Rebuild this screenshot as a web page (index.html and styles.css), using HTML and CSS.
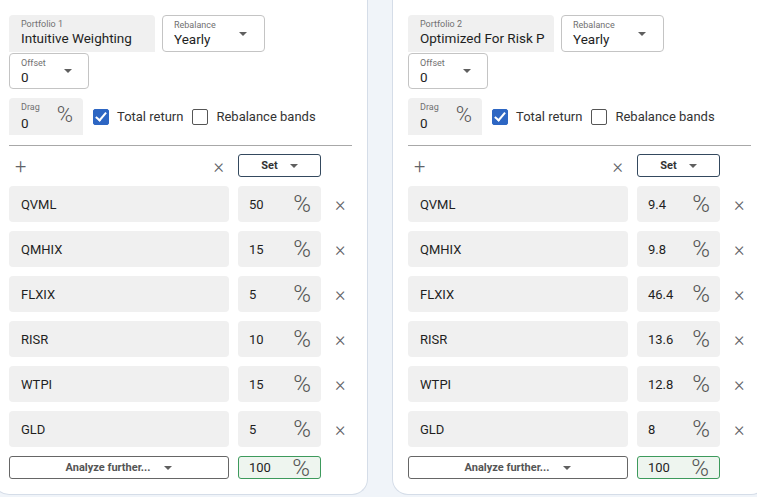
FILE: index.html
```html
<!DOCTYPE html>
<html lang="en">
<head>
    <meta charset="UTF-8">
    <meta name="viewport" content="width=device-width, initial-scale=1.0">
    <title>Portfolios</title>
    <link rel="stylesheet" href="styles.css">
</head>
<body>
    <div class="portfolios">
        <div class="card">
            <div class="settings">
                <div class="filled name-field">
                    <span class="label">Portfolio 1</span>
                    <span class="value">Intuitive Weighting</span>
                </div>
                <div class="outlined select rebalance">
                    <div>
                        <span class="label">Rebalance</span>
                        <span class="value">Yearly</span>
                    </div>
                    <span class="caret"></span>
                </div>
                <div class="outlined select offset">
                    <div>
                        <span class="label">Offset</span>
                        <span class="value">0</span>
                    </div>
                    <span class="caret"></span>
                </div>
            </div>
            <div class="options">
                <div class="filled drag-field">
                    <div>
                        <span class="label">Drag</span>
                        <span class="value">0</span>
                    </div>
                    <span class="pct">%</span>
                </div>
                <label class="check"><span class="box checked"></span>Total return</label>
                <label class="check"><span class="box"></span>Rebalance bands</label>
            </div>
            <hr class="divider">
            <div class="assets">
                <div class="tool-row">
                    <span class="icon-btn">+</span>
                    <span class="icon-btn">&times;</span>
                </div>
                <button class="set-btn">Set <span class="caret"></span></button>
                <span></span>

                <div class="filled ticker">QVML</div>
                <div class="filled weight"><span>50</span><span class="pct">%</span></div>
                <span class="remove">&times;</span>

                <div class="filled ticker">QMHIX</div>
                <div class="filled weight"><span>15</span><span class="pct">%</span></div>
                <span class="remove">&times;</span>

                <div class="filled ticker">FLXIX</div>
                <div class="filled weight"><span>5</span><span class="pct">%</span></div>
                <span class="remove">&times;</span>

                <div class="filled ticker">RISR</div>
                <div class="filled weight"><span>10</span><span class="pct">%</span></div>
                <span class="remove">&times;</span>

                <div class="filled ticker">WTPI</div>
                <div class="filled weight"><span>15</span><span class="pct">%</span></div>
                <span class="remove">&times;</span>

                <div class="filled ticker">GLD</div>
                <div class="filled weight"><span>5</span><span class="pct">%</span></div>
                <span class="remove">&times;</span>

                <button class="analyze-btn">Analyze further... <span class="caret"></span></button>
                <div class="total"><span>100</span><span class="pct">%</span></div>
                <span></span>
            </div>
        </div>

        <div class="card">
            <div class="settings">
                <div class="filled name-field">
                    <span class="label">Portfolio 2</span>
                    <span class="value">Optimized For Risk P</span>
                </div>
                <div class="outlined select rebalance">
                    <div>
                        <span class="label">Rebalance</span>
                        <span class="value">Yearly</span>
                    </div>
                    <span class="caret"></span>
                </div>
                <div class="outlined select offset">
                    <div>
                        <span class="label">Offset</span>
                        <span class="value">0</span>
                    </div>
                    <span class="caret"></span>
                </div>
            </div>
            <div class="options">
                <div class="filled drag-field">
                    <div>
                        <span class="label">Drag</span>
                        <span class="value">0</span>
                    </div>
                    <span class="pct">%</span>
                </div>
                <label class="check"><span class="box checked"></span>Total return</label>
                <label class="check"><span class="box"></span>Rebalance bands</label>
            </div>
            <hr class="divider">
            <div class="assets">
                <div class="tool-row">
                    <span class="icon-btn">+</span>
                    <span class="icon-btn">&times;</span>
                </div>
                <button class="set-btn">Set <span class="caret"></span></button>
                <span></span>

                <div class="filled ticker">QVML</div>
                <div class="filled weight"><span>9.4</span><span class="pct">%</span></div>
                <span class="remove">&times;</span>

                <div class="filled ticker">QMHIX</div>
                <div class="filled weight"><span>9.8</span><span class="pct">%</span></div>
                <span class="remove">&times;</span>

                <div class="filled ticker">FLXIX</div>
                <div class="filled weight"><span>46.4</span><span class="pct">%</span></div>
                <span class="remove">&times;</span>

                <div class="filled ticker">RISR</div>
                <div class="filled weight"><span>13.6</span><span class="pct">%</span></div>
                <span class="remove">&times;</span>

                <div class="filled ticker">WTPI</div>
                <div class="filled weight"><span>12.8</span><span class="pct">%</span></div>
                <span class="remove">&times;</span>

                <div class="filled ticker">GLD</div>
                <div class="filled weight"><span>8</span><span class="pct">%</span></div>
                <span class="remove">&times;</span>

                <button class="analyze-btn">Analyze further... <span class="caret"></span></button>
                <div class="total"><span>100</span><span class="pct">%</span></div>
                <span></span>
            </div>
        </div>
    </div>
</body>
</html>
```

FILE: styles.css
```css
body {
    font-family: Roboto, 'Noto Sans', sans-serif;
    background-color: #f0f4f9;
    color: #1f1f1f;
    margin: 0;
    padding: 0;
    overflow: hidden;
}
.portfolios {
    display: flex;
    gap: 24px;
    margin-left: -7px;
}
.card {
    flex: 0 0 375px;
    min-width: 0;
    box-sizing: border-box;
    height: 495px;
    padding: 15px 15px 0;
    background: #fff;
    border: 1px solid #d5dde8;
    border-top: none;
    border-radius: 0 0 16px 16px;
}
.label {
    display: block;
    font-size: 9px;
    line-height: 11px;
    color: #707070;
}
.value {
    display: block;
    font-size: 13.5px;
    line-height: 16px;
    white-space: nowrap;
}
.filled {
    background: #f0f0f0;
    border-radius: 4px 4px 0 0;
    box-sizing: border-box;
}
.outlined {
    border: 1px solid #c4c4c4;
    border-radius: 4px;
    box-sizing: border-box;
}
.caret {
    display: inline-block;
    width: 0;
    height: 0;
    border-left: 4.5px solid transparent;
    border-right: 4.5px solid transparent;
    border-top: 4.5px solid #5f5f5f;
}

/* name, rebalance and offset */
.settings {
    display: flex;
    flex-wrap: wrap;
    column-gap: 7px;
    row-gap: 1px;
    width: 300px;
}
.name-field {
    width: 146px;
    height: 37px;
    padding: 4px 12px 0;
    overflow: hidden;
}
.select {
    display: flex;
    align-items: center;
    justify-content: space-between;
    padding: 0 17px 0 11px;
}
.select > div {
    align-self: flex-start;
    padding-top: 4px;
}
.rebalance {
    width: 103px;
    height: 37px;
}
.offset {
    width: 80px;
    height: 36px;
    padding-right: 16px;
}

/* drag and checkboxes */
.options {
    display: flex;
    align-items: center;
    margin-top: 9px;
}
.drag-field {
    display: flex;
    justify-content: space-between;
    width: 74px;
    height: 37px;
    padding: 4px 10px 0 12px;
}
.drag-field .value {
    margin-top: 2px;
}
.drag-field .pct {
    margin-top: 1px;
}
.pct {
    font-size: 22px;
    font-weight: 300;
    color: #555;
    line-height: 24px;
}
.check {
    display: flex;
    align-items: center;
    font-size: 13px;
    color: #333;
    margin-left: 10px;
}
.check + .check {
    margin-left: 9px;
}
.box {
    width: 16px;
    height: 16px;
    box-sizing: border-box;
    border: 1.5px solid #555;
    border-radius: 2px;
    margin-right: 8px;
    position: relative;
}
.box.checked {
    background: #2d66c3;
    border-color: #2d66c3;
}
.box.checked::after {
    content: "";
    position: absolute;
    left: 4px;
    top: 0px;
    width: 4px;
    height: 9px;
    border: solid #fff;
    border-width: 0 2px 2px 0;
    transform: rotate(40deg);
}
.divider {
    border: none;
    border-top: 1px solid #a8a8a8;
    margin: 10px 0 0;
}

/* asset list */
.assets {
    display: grid;
    grid-template-columns: 220px 83px 22px;
    column-gap: 9px;
    row-gap: 9px;
    margin-top: 8px;
}
.tool-row {
    display: flex;
    align-items: center;
    justify-content: space-between;
    padding: 0 5px 0 6px;
    height: 23px;
}
.icon-btn {
    font-size: 20px;
    font-weight: 300;
    color: #5f6368;
}
.set-btn,
.analyze-btn {
    font-family: inherit;
    background: #fff;
    height: 23px;
    box-sizing: border-box;
    border-radius: 3px;
    display: flex;
    align-items: center;
    justify-content: center;
    gap: 12px;
    font-size: 11px;
    font-weight: 700;
    padding: 0;
}
.set-btn {
    border: 1px solid #34495e;
    color: #333;
}
.analyze-btn {
    border: 1px solid #666;
    color: #555;
    gap: 14px;
}
.ticker {
    height: 36px;
    display: flex;
    align-items: center;
    padding-left: 12px;
    font-size: 13px;
    border-radius: 4px;
}
.weight,
.total {
    display: flex;
    align-items: center;
    justify-content: space-between;
    padding: 0 10px 0 11px;
    font-size: 13px;
    box-sizing: border-box;
}
.weight {
    height: 36px;
    border-radius: 4px;
}
.weight .pct,
.total .pct {
    font-size: 24px;
}
.total {
    height: 23px;
    background: #eef5ef;
    border: 1px solid #3d9a5c;
    border-radius: 3px;
    padding-left: 10px;
}
.remove {
    display: flex;
    align-items: center;
    padding-left: 5px;
    font-size: 20px;
    font-weight: 300;
    color: #5f6368;
}
```
